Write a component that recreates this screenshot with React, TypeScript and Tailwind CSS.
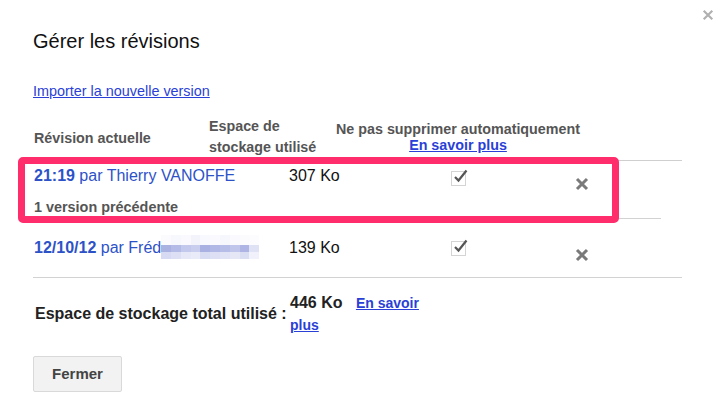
import React from "react";

const BLUE = "#2d52c8";

function Check() {
  return (
    <div className="relative w-[15px] h-[15px] border border-[#d4d4d4] bg-white">
      <svg className="absolute left-[1px] top-[-3px]" width="16" height="14" viewBox="0 0 16 14">
        <path d="M2 8 L5.5 11.5 L13.5 1.5" fill="none" stroke="#555" strokeWidth="2.2" />
      </svg>
    </div>
  );
}

function XIcon({ color = "#7a7a7a", size = 14, sw = 3 }: { color?: string; size?: number; sw?: number }) {
  return (
    <svg width={size} height={size} viewBox="0 0 14 14">
      <path d="M2 2 L12 12 M12 2 L2 12" stroke={color} strokeWidth={sw} strokeLinecap="butt" />
    </svg>
  );
}

const blurRows = [
  ["#fbfbfe", "#f7f8fd", "#f9f9fe", "#f2f3fb", "#f8f9fe", "#fafafe", "#f6f7fd", "#f9f9fe", "#fbfbfe", "#fcfcff"],
  ["#aab2e2", "#b3bbe6", "#c3c9ec", "#c9cdee", "#a9b1e2", "#b1b8e5", "#b6bde7", "#c0c6eb", "#aeb5e4", "#dfe2f5"],
  ["#d6daf2", "#dde0f4", "#e6e8f7", "#e9ebf8", "#d8dcf3", "#dde0f4", "#e0e3f5", "#e5e7f7", "#dadef3", "#f0f1fa"],
];

function Blur() {
  return (
    <div className="flex flex-col w-[98px] mt-[-4px]">
      {blurRows.map((r, i) => (
        <div key={i} className={i === 0 ? "flex h-[10px]" : "flex h-[7px]"}>
          {r.map((c, j) => (
            <div key={j} className="flex-1" style={{ background: c }} />
          ))}
        </div>
      ))}
    </div>
  );
}

export default function App() {
  return (
    <div className="relative w-[724px] h-[419px] bg-white overflow-hidden font-['Liberation_Sans',Arial,sans-serif]">
      <div className="absolute left-[702px] top-[9px]">
        <XIcon color="#b0b0b0" size={12} sw={2.5} />
      </div>

      <div className="pl-[33px] pt-[29px]">
        <h1 className="text-[20px] leading-[24px] text-[#111]">Gérer les révisions</h1>
        <a className="block mt-[30px] text-[14.4px] leading-[16px] text-[#2a3fd6] underline w-max">
          Importer la nouvelle version
        </a>

        <div className="mt-[17px] w-[649px]">
          {/* header */}
          <div className="flex h-[45px] items-center border-b border-[#cfcfcf] font-bold text-[14.3px] text-[#555]">
            <div className="w-[176px] pl-[1px] pt-[2px] whitespace-nowrap">Révision actuelle</div>
            <div className="w-[127px] leading-[21px] pb-[2px] whitespace-nowrap">
              Espace de
              <br />
              stockage utilisé
            </div>
            <div className="w-[244px] text-center leading-[16px] whitespace-nowrap pb-[3px]">
              Ne pas supprimer automatiquement
              <br />
              <a className="underline text-[#2a3fd6]">En savoir plus</a>
            </div>
            <div className="flex-1" />
          </div>

          {/* row 1 */}
          <div className="flex h-[58px] w-[628px] border-b border-[#d2d2d2]">
            <div className="w-[256px] pl-[1px] pt-[6px]">
              <div className="text-[16px] leading-[18px] whitespace-nowrap" style={{ color: BLUE }}>
                <span className="font-bold">21:19</span> par Thierry VANOFFE
              </div>
              <div className="mt-[14px] text-[14.4px] leading-[16px] font-bold text-[#555] whitespace-nowrap">
                1 version précédente
              </div>
            </div>
            <div className="w-[47px] pt-[6px] text-[16px] leading-[18px] text-[#111] whitespace-nowrap">307 Ko</div>
            <div className="w-[244px] flex justify-center pt-[10px]">
              <Check />
            </div>
            <div className="pt-[16px] ml-[-5px]">
              <XIcon />
            </div>
          </div>

          {/* row 2 */}
          <div className="flex h-[59px] border-b border-[#d2d2d2]">
            <div className="w-[256px] pl-[1px] pt-[20px] flex items-start">
              <div className="text-[16px] leading-[18px] whitespace-nowrap" style={{ color: BLUE }}>
                <span className="font-bold">12/10/12</span> par Fréd
              </div>
              <Blur />
            </div>
            <div className="w-[47px] pt-[20px] text-[16px] leading-[18px] text-[#111] whitespace-nowrap">139 Ko</div>
            <div className="w-[244px] flex justify-center pt-[22px]">
              <Check />
            </div>
            <div className="pt-[29px] ml-[-5px]">
              <XIcon />
            </div>
          </div>

          {/* footer */}
          <div className="flex items-center pt-[14px]">
            <div className="w-[257px] pl-[2px] font-bold text-[16px] text-[#222] whitespace-nowrap">
              Espace de stockage total utilisé :
            </div>
            <div className="w-[135px] leading-[22px] font-bold">
              <span className="text-[16px] text-[#222]">446 Ko</span>{" "}
              <a className="ml-[9px] underline text-[14px] text-[#2a3fd6]">En savoir plus</a>
            </div>
          </div>
        </div>

        <button className="mt-[20px] w-[89px] h-[36px] border border-[#d9d9d9] bg-[#f2f2f2] rounded-[2px] font-bold text-[15px] text-[#444]">
          Fermer
        </button>
      </div>

      {/* annotation */}
      <div className="absolute left-[18px] top-[157px] w-[601px] h-[66px] border-[7px] border-[#ff2d6c] rounded-[5px]" />
    </div>
  );
}
